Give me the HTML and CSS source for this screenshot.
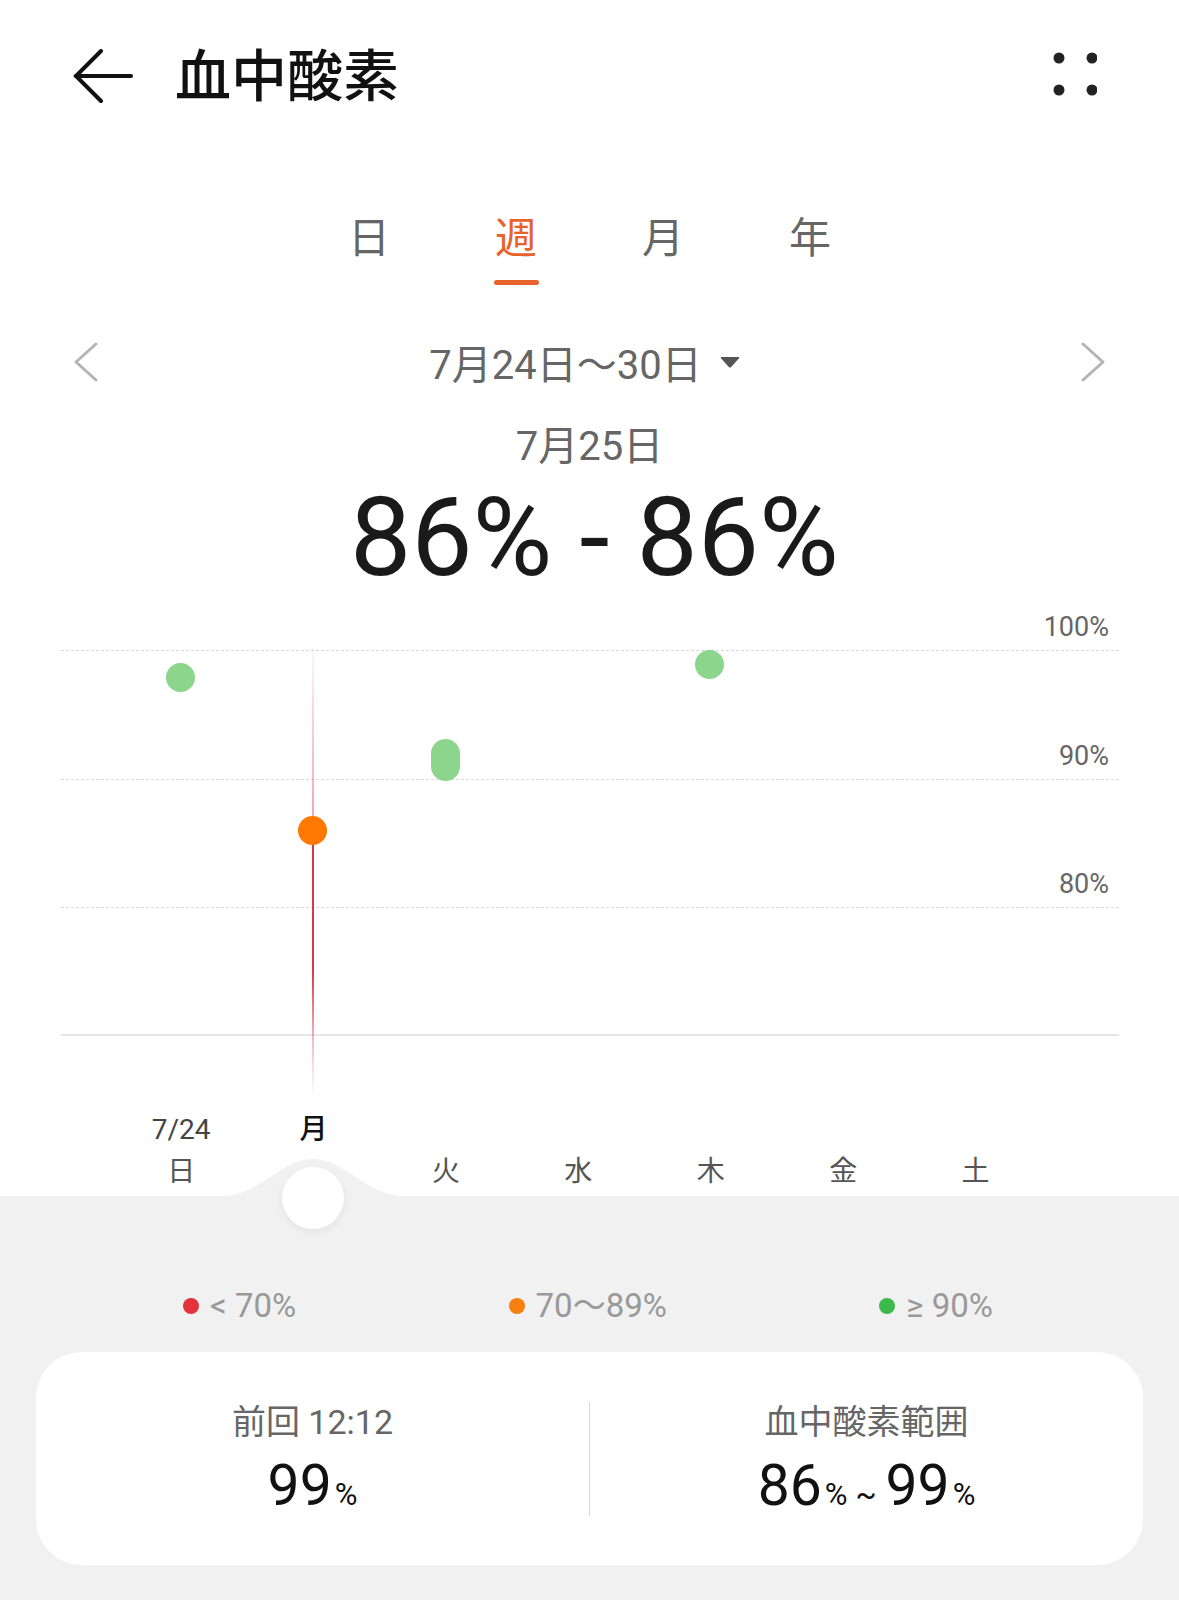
FILE: index.html
```html
<!DOCTYPE html>
<html lang="ja">
<head>
    <meta charset="UTF-8">
    <meta name="viewport" content="width=device-width, initial-scale=1.0">
    <title>血中酸素</title>
    <link rel="stylesheet" href="styles.css">
</head>
<body>
    <div class="screen">
        <header class="top-bar">
            <svg class="back-icon" viewBox="0 0 60 56" fill="none" stroke="#111" stroke-width="4" stroke-linecap="round">
                <path d="M3 27H58"/>
                <path d="M28 2L3 27L28 52"/>
            </svg>
            <h1 class="title">血中酸素</h1>
            <svg class="more-icon" viewBox="0 0 44 44" fill="#222">
                <circle cx="6" cy="6" r="5.5"/>
                <circle cx="39" cy="6" r="5.5"/>
                <circle cx="6" cy="38" r="5.5"/>
                <circle cx="39" cy="38" r="5.5"/>
            </svg>
        </header>

        <nav class="period-tabs">
            <div class="tab">日</div>
            <div class="tab active">週</div>
            <div class="tab">月</div>
            <div class="tab">年</div>
        </nav>

        <div class="range-nav">
            <svg class="chevron" viewBox="0 0 30 40" fill="none" stroke="#b4b4b4" stroke-width="3" stroke-linecap="round" stroke-linejoin="round">
                <path d="M23 2L3 20L23 38"/>
            </svg>
            <div class="range-label">
                <span>7月24日〜30日</span>
                <svg class="caret" viewBox="0 0 20 12" fill="#555">
                    <path d="M1.5 1H18.5Q19.8 1 19 2.2L11.2 11Q10 12.2 8.8 11L1 2.2Q0.2 1 1.5 1Z"/>
                </svg>
            </div>
            <svg class="chevron" viewBox="0 0 30 40" fill="none" stroke="#b4b4b4" stroke-width="3" stroke-linecap="round" stroke-linejoin="round">
                <path d="M7 2L27 20L7 38"/>
            </svg>
        </div>

        <div class="sel-date">7月25日</div>
        <div class="sel-value">86% - 86%</div>

        <div class="chart">
            <div class="plot">
                <div class="band band-first"><span class="y-label">100%</span></div>
                <div class="band band-second"><span class="y-label">90%</span></div>
                <div class="band"><span class="y-label">80%</span></div>
                <div class="band band-base"></div>
            </div>

            <!-- selected day cursor + readings -->
            <div class="cursor-line"></div>
            <span class="point ok p-sun"></span>
            <span class="point mid p-mon"></span>
            <span class="point ok p-tue"></span>
            <span class="point ok p-thu"></span>

            <div class="days">
                <div class="day"><span class="day-top">7/24</span><span class="day-name">日</span></div>
                <div class="day selected"><span class="day-top">月</span><span class="day-name"></span></div>
                <div class="day"><span class="day-top"></span><span class="day-name">火</span></div>
                <div class="day"><span class="day-top"></span><span class="day-name">水</span></div>
                <div class="day"><span class="day-top"></span><span class="day-name">木</span></div>
                <div class="day"><span class="day-top"></span><span class="day-name">金</span></div>
                <div class="day"><span class="day-top"></span><span class="day-name">土</span></div>
            </div>
        </div>

        <section class="summary">
            <svg class="bump" viewBox="0 0 200 40">
                <path d="M0 40C50 40 66 2 100 2C134 2 150 40 200 40Z" fill="#f1f1f1"/>
            </svg>
            <div class="knob"></div>

            <div class="legend">
                <div class="legend-item"><span class="legend-dot low"></span>&lt; 70%</div>
                <div class="legend-item"><span class="legend-dot mid"></span>70〜89%</div>
                <div class="legend-item"><span class="legend-dot ok"></span>≥ 90%</div>
            </div>

            <div class="card">
                <div class="stat">
                    <div class="stat-label">前回 12:12</div>
                    <div class="stat-value">99<small>%</small></div>
                </div>
                <div class="divider"></div>
                <div class="stat">
                    <div class="stat-label">血中酸素範囲</div>
                    <div class="stat-value">86<small>%</small><small class="tilde">~</small>99<small>%</small></div>
                </div>
            </div>
        </section>
    </div>
</body>
</html>
```

FILE: styles.css
```css
html {
    background-color: #f1f1f1;
}

body {
    margin: 0;
    font-family: Roboto, "Noto Sans CJK JP", sans-serif;
    color: #1a1a1a;
}

.screen {
    width: 1179px;
    min-height: 1600px;
    background-color: #ffffff;
    display: flex;
    flex-direction: column;
}

/* header */
.top-bar {
    height: 154px;
    display: flex;
    align-items: center;
    padding: 0 82px 0 73px;
}

.back-icon {
    width: 60px;
    height: 56px;
}

.title {
    margin: 0 0 0 42px;
    font-size: 56px;
    font-weight: 500;
    color: #111;
    flex: 1;
    line-height: 1;
}

.more-icon {
    width: 44px;
    height: 44px;
    margin-bottom: 6px;
}

/* day / week / month / year */
.period-tabs {
    display: flex;
    justify-content: center;
    margin-top: 55px;
}

.tab {
    width: 147px;
    display: flex;
    flex-direction: column;
    align-items: center;
    font-size: 42px;
    line-height: 60px;
    color: #666;
}

.tab:after {
    content: '';
    width: 45px;
    height: 5px;
    margin-top: 11px;
    border-radius: 3px;
}

.tab.active {
    color: #e8632b;
}

.tab.active:after {
    background-color: #e8632b;
}

/* range navigation */
.range-nav {
    display: flex;
    align-items: center;
    justify-content: space-between;
    padding: 0 73px;
    margin-top: 47px;
    height: 60px;
}

.chevron {
    width: 30px;
    height: 40px;
}

.range-label {
    display: flex;
    align-items: center;
    gap: 18px;
    padding-right: 10px;
    font-size: 40px;
    color: #666;
}

.caret {
    width: 20px;
    height: 12px;
}

.sel-date {
    margin-top: 30px;
    text-align: center;
    font-size: 40px;
    line-height: 50px;
    color: #666;
}

.sel-value {
    margin-top: 12px;
    padding-left: 10px;
    text-align: center;
    font-size: 109px;
    line-height: 108px;
    color: #1a1a1a;
}

/* chart */
.chart {
    position: relative;
    margin-top: 4px;
    padding: 0 60px 0 61px;
}

.band {
    box-sizing: border-box;
    height: 128px;
    border-bottom: 1px dashed #d8d8d8;
    display: flex;
    align-items: flex-end;
    justify-content: flex-end;
}

.band-first {
    height: 55px;
}

.band-second {
    height: 129px;
}

.band-base {
    border-bottom: 2px solid #e6e6e6;
}

.y-label {
    font-size: 27px;
    line-height: 30px;
    color: #666;
    padding: 0 10px 8px 0;
}

.cursor-line {
    position: absolute;
    left: 312px;
    top: 52px;
    width: 2px;
    height: 448px;
    background: linear-gradient(to bottom,
        rgba(240, 120, 140, 0.05) 0%,
        rgba(240, 130, 150, 0.35) 15%,
        rgba(236, 100, 122, 0.6) 39%,
        #d8364a 40%,
        #d63a4c 72%,
        rgba(230, 90, 110, 0.4) 88%,
        rgba(240, 140, 150, 0) 100%);
}

.point {
    position: absolute;
    width: 29px;
    height: 29px;
    border-radius: 15px;
}

.point.ok {
    background-color: #8cd58c;
}

.point.mid {
    background-color: #ff7800;
}

.p-sun { left: 166px; top: 67px; }
.p-mon { left: 298px; top: 220px; }
.p-tue { left: 431px; top: 143px; height: 42px; }
.p-thu { left: 695px; top: 54px; }

.days {
    display: grid;
    grid-template-columns: repeat(7, 132.4px);
    margin: 73px 0 3px 54px;
}

.day {
    display: flex;
    flex-direction: column;
    align-items: center;
    font-size: 28px;
    line-height: 42px;
    color: #555;
}

.day-top {
    height: 42px;
    color: #444;
}

.day-name {
    height: 42px;
}

.day.selected .day-top {
    color: #111;
    font-weight: 500;
}

/* bottom summary */
.summary {
    position: relative;
    flex: 1;
    background-color: #f1f1f1;
    padding: 90px 36px 35px;
}

.bump {
    position: absolute;
    left: 213px;
    top: -39px;
    width: 200px;
    height: 40px;
}

.knob {
    position: absolute;
    left: 282px;
    top: -29px;
    width: 62px;
    height: 62px;
    border-radius: 50%;
    background-color: #fff;
    box-shadow: 0 3px 8px rgba(0, 0, 0, 0.06);
}

.legend {
    display: flex;
    justify-content: space-between;
    padding: 0 150px 0 147px;
    font-size: 33px;
    line-height: 40px;
    color: #999;
}

.legend-item {
    display: flex;
    align-items: center;
    gap: 11px;
}

.legend-dot {
    width: 16px;
    height: 16px;
    border-radius: 50%;
}

.legend-dot.low { background-color: #e2323a; }
.legend-dot.mid { background-color: #f77f10; }
.legend-dot.ok { background-color: #3cba4a; }

.card {
    margin-top: 26px;
    height: 213px;
    box-sizing: border-box;
    background-color: #fff;
    border-radius: 46px;
    display: grid;
    grid-template-columns: 1fr 1px 1fr;
    align-items: center;
}

.stat {
    text-align: center;
    padding-top: 5px;
}

.stat-label {
    font-size: 34px;
    line-height: 44px;
    color: #666;
}

.stat-value {
    margin-top: 14px;
    font-size: 57px;
    line-height: 56px;
    color: #111;
}

.stat-value small {
    font-size: 31px;
    margin-left: 3px;
}

.stat-value .tilde {
    margin: 0 9px 0 8px;
}

.divider {
    height: 114px;
    background-color: #d8d8d8;
}
```
